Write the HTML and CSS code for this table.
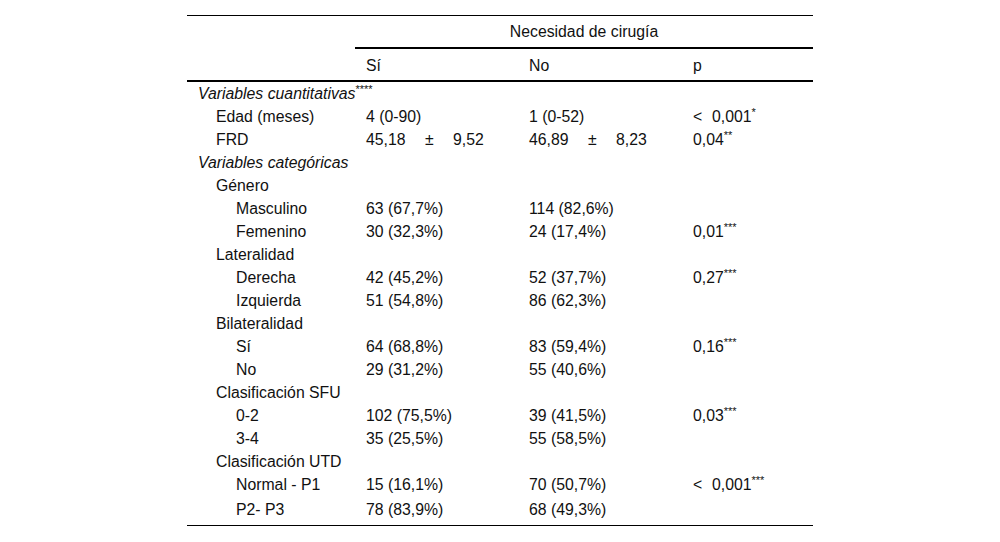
FILE: index.html
```html
<!DOCTYPE html>
<html lang="es">
<head>
<meta charset="utf-8">
<link rel="stylesheet" href="styles.css">
</head>
<body>
<div class="wrap">
<table class="tbl">
  <colgroup>
    <col class="c1"><col class="c2"><col class="c3"><col class="c4">
  </colgroup>
  <thead>
    <tr class="h1">
      <th></th>
      <th colspan="3" class="group">Necesidad de cirugía</th>
    </tr>
    <tr class="h2">
      <th></th>
      <th>Sí</th>
      <th>No</th>
      <th>p</th>
    </tr>
  </thead>
  <tbody>
    <tr class="first"><td class="sec"><i>Variables cuantitativas</i><sup>****</sup></td><td></td><td></td><td></td></tr>
    <tr><td class="l1">Edad (meses)</td><td>4 (0-90)</td><td>1 (0-52)</td><td><span class="lt">&lt;</span>0,001<sup>*</sup></td></tr>
    <tr><td class="l1">FRD</td><td><span class="m">45,18</span><span class="pm">±</span>9,52</td><td><span class="m">46,89</span><span class="pm">±</span>8,23</td><td>0,04<sup>**</sup></td></tr>
    <tr><td class="sec"><i>Variables categóricas</i></td><td></td><td></td><td></td></tr>
    <tr><td class="l1">Género</td><td></td><td></td><td></td></tr>
    <tr><td class="l2">Masculino</td><td>63 (67,7%)</td><td>114 (82,6%)</td><td></td></tr>
    <tr><td class="l2">Femenino</td><td>30 (32,3%)</td><td>24 (17,4%)</td><td>0,01<sup>***</sup></td></tr>
    <tr><td class="l1">Lateralidad</td><td></td><td></td><td></td></tr>
    <tr><td class="l2">Derecha</td><td>42 (45,2%)</td><td>52 (37,7%)</td><td>0,27<sup>***</sup></td></tr>
    <tr><td class="l2">Izquierda</td><td>51 (54,8%)</td><td>86 (62,3%)</td><td></td></tr>
    <tr><td class="l1">Bilateralidad</td><td></td><td></td><td></td></tr>
    <tr><td class="l2">Sí</td><td>64 (68,8%)</td><td>83 (59,4%)</td><td>0,16<sup>***</sup></td></tr>
    <tr><td class="l2">No</td><td>29 (31,2%)</td><td>55 (40,6%)</td><td></td></tr>
    <tr><td class="l1">Clasificación SFU</td><td></td><td></td><td></td></tr>
    <tr><td class="l2">0-2</td><td>102 (75,5%)</td><td>39 (41,5%)</td><td>0,03<sup>***</sup></td></tr>
    <tr><td class="l2">3-4</td><td>35 (25,5%)</td><td>55 (58,5%)</td><td></td></tr>
    <tr><td class="l1">Clasificación UTD</td><td></td><td></td><td></td></tr>
    <tr><td class="l2">Normal - P1</td><td>15 (16,1%)</td><td>70 (50,7%)</td><td><span class="lt">&lt;</span>0,001<sup>***</sup></td></tr>
    <tr class="last"><td class="l2">P2- P3</td><td>78 (83,9%)</td><td>68 (49,3%)</td><td></td></tr>
  </tbody>
</table>
</div>
</body>
</html>
```

FILE: styles.css
```css
html, body {
  margin: 0;
  padding: 0;
  background: #fff;
}
body {
  font-family: "Liberation Sans", Arial, sans-serif;
  font-size: 15.8px;
  color: #111;
}
.wrap {
  padding-top: 15px;
  display: flex;
  justify-content: flex-start;
  padding-left: 187px;
}
.tbl {
  width: 626px;
  border-collapse: collapse;
  table-layout: fixed;
  border-top: 1px solid #000;
  border-bottom: 1px solid #000;
}
.c1 { width: 168px; }
.c2 { width: 163px; }
.c3 { width: 164px; }
.c4 { width: 131px; }
th, td {
  text-align: left;
  font-weight: normal;
  padding: 0 0 0 11px;
  white-space: nowrap;
  line-height: 18px;
}
.h1 th {
  height: 30px;
  padding-top: 1px;
  vertical-align: middle;
}
.h1 th.group {
  text-align: center;
  padding-left: 0;
  border-bottom: 2px solid #000;
}
.h2 th {
  height: 29px;
  padding-top: 2px;
  vertical-align: middle;
  border-bottom: 2px solid #000;
}
tbody td {
  height: 23px;
  vertical-align: middle;
}
tbody tr.first td { height: 22px; padding-top: 1px; }
tbody tr.last td { height: 25px; padding-top: 1px; padding-bottom: 3px; }
td.sec { padding-left: 11px; }
td.l1 { padding-left: 29px; }
td.l2 { padding-left: 49px; }
sup {
  font-size: 11px;
  line-height: 0;
  vertical-align: 6px;
}
.m { display: inline-block; width: 50px; }
.pm { display: inline-block; width: 37px; padding-left: 9px; box-sizing: border-box; }
.lt { display: inline-block; width: 19px; }
```
